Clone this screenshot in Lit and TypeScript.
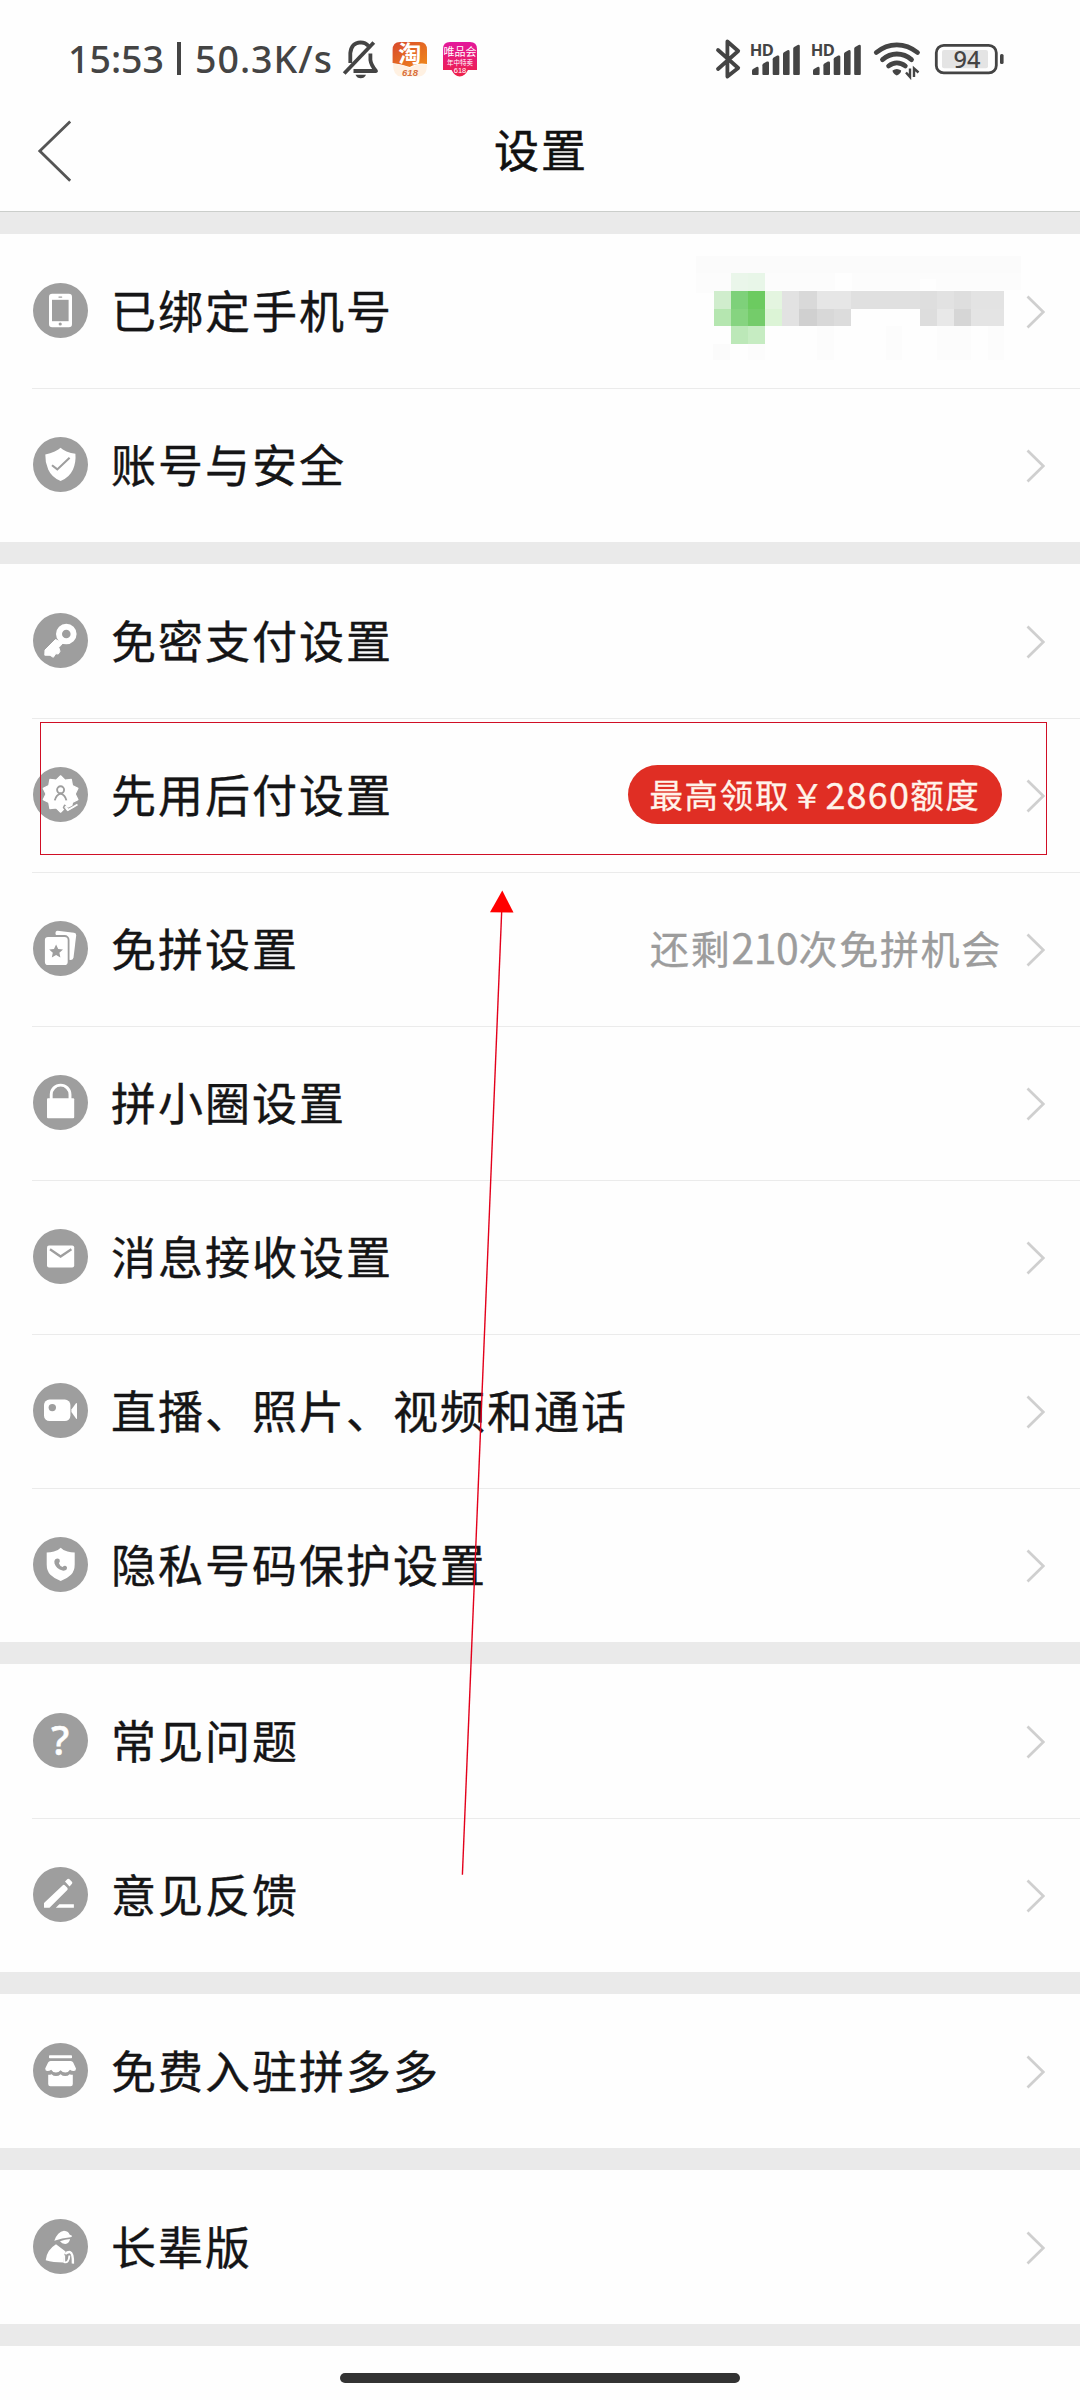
import { LitElement, html, svg, css, nothing, type TemplateResult } from "lit";
import { customElement, property } from "lit/decorators.js";

const GREY = "#9e9e9e";

/* Ten-pointed rosette used by the pay-later icon. */
const rosette = Array.from({ length: 20 }, (_, i) => {
  const r = i % 2 === 0 ? 18.2 : 14.6;
  const a = (Math.PI * i) / 10 - Math.PI / 2;
  return `${(27.6 + r * Math.cos(a)).toFixed(2)},${(27 + r * Math.sin(a)).toFixed(2)}`;
}).join(" ");

/* White pictograms, drawn on a 55 x 55 grey disc. */
const GLYPHS: Record<string, TemplateResult> = {
  phone: svg`<rect x="16" y="10.8" width="23" height="33.4" rx="3.2" fill="#fff"/>
    <rect x="19" y="16.8" width="16.6" height="21.4" fill=${GREY}/>
    <rect x="25.3" y="13.4" width="4" height="1.4" rx="0.7" fill=${GREY}/>
    <circle cx="27.2" cy="41" r="1.6" fill=${GREY}/>`,
  shield: svg`<path fill="#fff" d="M27.6 10.8Q29 12.4 33.5 14.4Q38 16.2 42.4 16.8Q43.2 25 40 32.5Q36.4 40.5 27.6 44Q18.8 40.5 15.2 32.5Q12 25 12.3 17.4Q17.2 16.2 21.7 14.4Q26 12.5 27.6 10.8Z"/>
    <path d="M19 28.2L24.3 32.4L36.6 20.8" fill="none" stroke=${GREY} stroke-width="2.1"/>`,
  key: svg`<circle cx="33.3" cy="21" r="7.3" fill="none" stroke="#fff" stroke-width="6"/>
    <path fill="#fff" stroke="#fff" stroke-width="1" stroke-linejoin="round" d="M22.5 26.5L12 37L11.8 42.2L17 42.3L20.3 44.3L22.8 40.7L25.3 41L27 38.3L25.8 34.5L30 30Z"/>`,
  rosette: svg`<polygon points=${rosette} fill="#fff" stroke="#fff" stroke-width="1.2" stroke-linejoin="round"/>
    <circle cx="27.6" cy="22.8" r="3.5" fill="none" stroke=${GREY} stroke-width="1.9"/>
    <path d="M21.8 33.4Q23.2 27.6 27.6 26.6Q32 27.6 33.4 33.4" fill="none" stroke=${GREY} stroke-width="1.9"/>
    <path d="M31.6 38.2L34.8 41.8L45.6 36.6L42.5 40.3L34 45L30.5 40.5Z" fill="#fff" stroke=${GREY} stroke-width="1.5" stroke-linejoin="round"/>
    <path d="M32.5 39L35 43L44.5 37.5" fill="none" stroke="#fff" stroke-width="1.9"/>`,
  cards: svg`<path fill="#fff" d="M24.5 9.8L41 11.7Q43.4 12 43.2 14.5L40.5 36.6Q40.2 39 38 39L35.5 38.8L22.5 13Q22.3 9.9 24.5 9.8Z"/>
    <rect x="11" y="15" width="24.6" height="30" rx="4" fill="#fff" stroke=${GREY} stroke-width="1.8"/>
    <path fill=${GREY} d="M23.1 23.4L25.2 28L30 28.5L26.4 31.7L27.4 36.6L23.1 34L18.8 36.6L19.8 31.7L16.2 28.5L21 28Z"/>`,
  lock: svg`<rect x="14" y="23.3" width="27.2" height="20" rx="1" fill="#fff"/>
    <path d="M18.2 24V19.5A9.4 9.4 0 0 1 37 19.5V24" fill="none" stroke="#fff" stroke-width="2.9"/>`,
  mail: svg`<rect x="14" y="16.4" width="27.2" height="22.2" rx="2" fill="#fff"/>
    <path d="M17 20.3L27.6 27.5L38.4 20.3" fill="none" stroke=${GREY} stroke-width="2.3"/>`,
  camera: svg`<rect x="11" y="16.6" width="26.4" height="21.4" rx="5.5" fill="#fff"/>
    <circle cx="19.3" cy="24.6" r="3.7" fill=${GREY}/>
    <path d="M38.4 26.5L43 20.3Q44 19.3 44 21V35Q44 36.6 43 35.4L38.4 29Z" fill="#fff"/>`,
  callShield: svg`<path fill="#fff" d="M27.7 10.8Q30 13.5 34.5 14.5Q38 15.3 41.7 15.5V27.5Q41.7 34 38 37.8Q34 41.8 27.7 44Q21.4 41.8 17.4 37.8Q13.7 34 13.7 27.5V15.5Q17.4 15.3 20.9 14.5Q25.4 13.5 27.7 10.8Z"/>
    <path fill=${GREY} d="M22.3 22.3Q24.8 20.8 26.6 22.6Q27.4 24.5 25.9 26.3Q26.9 29.3 29.6 29.9Q31.3 28.3 33 29Q34.6 30 33.8 32.3Q32.4 34 29.5 33.6Q23.4 32 21.5 26.5Q20.8 23.5 22.3 22.3Z"/>`,
  question: svg`<text x="27.3" y="41.7" text-anchor="middle" font-family="Noto Sans, sans-serif" font-weight="500" font-size="40" fill="#fff" stroke="#fff" stroke-width="0.6">?</text>`,
  pencil: svg`<path fill="#fff" d="M11 36L29.8 18.2Q31 17.4 32 18.5L34.3 20.8Q35.2 22 34.3 23L16.5 40.8H11.5Q11 40.8 11 40.3Z"/>
    <path fill="#fff" d="M32 14.5L34.5 12Q35.5 11.3 36.5 12.2L38.9 14.7Q39.8 15.8 39 16.8L36.5 19.6Z"/>
    <path fill="#fff" d="M26.3 37.3H40.9V40.8H22.8Z"/>`,
  store: svg`<rect x="16" y="12.3" width="23" height="2.9" rx="0.8" fill="#fff"/>
    <path fill="#fff" d="M17.5 17.9H37.8Q39.5 17.9 40.2 19.5L43 25.5Q43 28 40.8 28Q38.5 28 37 26.8Q35.5 29.6 32.3 29.6Q29.5 29.6 27.6 27.2Q25.7 29.6 22.9 29.6Q19.7 29.6 18.2 26.8Q16.7 28 14.4 28Q12.2 28 12.2 25.5L15.1 19.5Q15.8 17.9 17.5 17.9Z"/>
    <path fill="#fff" d="M15.2 31.8Q17.3 31.7 18.6 31.2Q20.3 33.1 23 33.1Q25.7 33.1 27.6 31.2Q29.5 33.1 32.2 33.1Q34.9 33.1 36.6 31.2Q37.9 31.7 39.8 31.8V41Q39.8 43.2 37.6 43.2H17.4Q15.2 43.2 15.2 41Z"/>`,
  elder: svg`<path fill="#fff" d="M21.3 21.8Q24.5 12.5 31 11.7Q36 12.3 36.5 15.6L39 16.8Q39.2 18 37.5 18.2Q29 18.8 21.3 21.8Z"/>
    <path fill="#fff" d="M27 22.3Q32 20.2 37 20Q36.3 24.8 32.3 24.9Q29 25 27 22.3Z"/>
    <path fill="#fff" d="M23 25.2L32.6 32.6Q30.6 36 30.5 43.6Q20 43.5 12.7 41.3Q13.5 31 23 25.2Z"/>
    <path d="M31.2 36.2V43.2Q35.8 44.600 36.400 36.500" fill="none" stroke="#fff" stroke-width="1.900" stroke-linejoin="round"/>
    <path d="M32.200 35Q34.500 32.800 37 33.100Q40.200 34 39.900 44.600" fill="none" stroke="#fff" stroke-width="2.400"/>`,
};

interface Item {
  icon: string;
  label: string;
  kind?: "mosaic" | "badge" | "note";
}

const GROUPS: Item[][] = [
  [
    { icon: "phone", label: "已绑定手机号", kind: "mosaic" },
    { icon: "shield", label: "账号与安全" },
  ],
  [
    { icon: "key", label: "免密支付设置" },
    { icon: "rosette", label: "先用后付设置", kind: "badge" },
    { icon: "cards", label: "免拼设置", kind: "note" },
    { icon: "lock", label: "拼小圈设置" },
    { icon: "mail", label: "消息接收设置" },
    { icon: "camera", label: "直播、照片、视频和通话" },
    { icon: "callShield", label: "隐私号码保护设置" },
  ],
  [
    { icon: "question", label: "常见问题" },
    { icon: "pencil", label: "意见反馈" },
  ],
  [{ icon: "store", label: "免费入驻拼多多" }],
  [{ icon: "elder", label: "长辈版" }],
];

/* Pixelated phone number: [x, y, width, height, colour]. */
const MOSAIC: [number, number, number, number, string][] = [
  [0, 0, 325, 17, "#fbfbfb"], [0, 17, 35, 20, "#fcfcfc"], [69, 17, 256, 17, "#fcfcfc"],
  [139, 17, 17, 17, "#fefefe"], [224, 23, 16, 11, "#fefefe"],
  [35, 17, 17, 18, "#eaf6ea"], [52, 17, 17, 18, "#e8f6e8"],
  [18, 35, 17, 18, "#d0edcd"], [35, 35, 17, 18, "#7ed17a"], [52, 35, 17, 18, "#6ccb60"], [69, 35, 17, 18, "#e4f5e0"],
  [18, 53, 17, 17, "#b5e6b0"], [35, 53, 17, 17, "#86d480"], [52, 53, 17, 17, "#74cc6a"], [69, 53, 17, 17, "#dcf4d6"],
  [35, 70, 17, 18, "#bce8b8"], [52, 70, 17, 18, "#c6ecc2"],
  [86, 35, 17, 18, "#e2e2e2"], [103, 35, 18, 18, "#d9d9d9"], [121, 35, 34, 18, "#e6e6e6"], [155, 35, 69, 18, "#e0e0e0"],
  [224, 35, 17, 18, "#dedede"], [241, 35, 17, 18, "#e2e2e2"], [258, 35, 17, 18, "#dedede"], [275, 35, 33, 18, "#e3e3e3"],
  [86, 53, 17, 17, "#e2e2e2"], [103, 53, 18, 17, "#d0d0d0"], [121, 53, 17, 17, "#d8d8d8"], [138, 53, 17, 17, "#dcdcdc"],
  [224, 53, 17, 17, "#dddddd"], [241, 53, 17, 17, "#e8e8e8"], [258, 53, 17, 17, "#d6d6d6"], [275, 53, 33, 17, "#e4e4e4"],
  [17, 88, 17, 16, "#fbfbfb"], [52, 88, 17, 16, "#fcfcfc"], [121, 70, 17, 34, "#fcfcfc"],
  [190, 70, 16, 34, "#fcfcfc"], [241, 70, 34, 34, "#fcfcfc"], [292, 70, 16, 34, "#fcfcfc"],
];

@customElement("setting-row")
export class SettingRow extends LitElement {
  @property({ attribute: false }) item!: Item;

  static styles = css`
    :host { display: flex; box-sizing: border-box; height: 154px; align-items: center; padding: 0 35px 0 33px; }
    .disc { display: block; flex: none; width: 55px; height: 55px; margin-bottom: 1px; }
    .label {
      flex: 1; margin: 0 0 3px 23px; white-space: nowrap; color: #151516;
      font-size: 45px; line-height: 64px; letter-spacing: 2px; -webkit-text-stroke: 0.35px #151516;
    }
    .chevron { display: block; flex: none; width: 20px; height: 36px; margin: 1px 0 0 22px; }
    .badge {
      box-sizing: border-box; width: 374px; height: 59px; border-radius: 30px; background: #e02e24; color: #fff3ea;
      display: flex; align-items: center; justify-content: center; margin: 0 1px 1px 0; padding-bottom: 3px;
      font-size: 33.5px; letter-spacing: 1.7px; white-space: nowrap; -webkit-text-stroke: 0.3px #fff3ea;
    }
    .badge .num { font-size: 36px; letter-spacing: 1.2px; }
    .note { color: #9c9c9c; font-size: 39px; letter-spacing: 1.7px; line-height: 60px; white-space: nowrap; margin: 0 1px 5px 0; -webkit-text-stroke: 0.3px #9c9c9c; }
    .note .num { font-size: 41px; letter-spacing: -0.4px; }
    .mosaic { display: block; width: 325px; height: 104px; margin: 0 -18px 6px 0; }
  `;

  private extra() {
    switch (this.item.kind) {
      case "badge":
        return html`<div class="badge"><span>最高领取￥</span><span class="num">2860</span><span>额度</span></div>`;
      case "note":
        return html`<div class="note">还剩<span class="num">210</span>次免拼机会</div>`;
      case "mosaic":
        return html`<svg class="mosaic" viewBox="0 0 325 104" shape-rendering="crispEdges">
          ${MOSAIC.map(([x, y, w, h, c]) => svg`<rect x=${x} y=${y} width=${w} height=${h} fill=${c}/>`)}
        </svg>`;
      default:
        return nothing;
    }
  }

  render() {
    return html`
      <svg class="disc" viewBox="0 0 55 55"><circle cx="27.5" cy="27.5" r="27.5" fill=${GREY} />${GLYPHS[this.item.icon]}</svg>
      <span class="label">${this.item.label}</span>
      ${this.extra()}
      <svg class="chevron" viewBox="0 0 20 36"><path d="M2.5 2.5L18.3 18L2.5 33.5" fill="none" stroke="#cfcfcf" stroke-width="2.7" /></svg>
    `;
  }
}

@customElement("status-bar")
export class StatusBar extends LitElement {
  static styles = css`
    :host { display: flex; box-sizing: border-box; height: 92px; padding: 36px 74px 0 68px; align-items: flex-start; color: #444; }
    .clock { display: flex; width: 272px; font: 500 37.5px/46px "Noto Sans", sans-serif; white-space: nowrap; }
    .time { width: 101px; }
    .bar { width: 4px; height: 33px; margin: 6px 14px 0 8px; background: #444; }
    .speed { letter-spacing: 1px; }
    svg { display: block; flex: none; height: 44px; }
    .bell { width: 40px; }
    .tao { width: 36px; margin-left: 12px; }
    .vip { width: 36px; margin-left: 14px; }
    .space { flex: 1; }
    .bt { width: 28px; }
    .sig { width: 54px; margin-left: 7px; }
    .wifi { width: 50px; margin-left: 7px; }
    .bat { width: 74px; margin-left: 10px; }
  `;

  private signal() {
    const bars = [[753, 66.7], [763.4, 61.3], [773.7, 55.3], [784, 50], [794.2, 44.7]];
    return html`<svg class="sig" viewBox="751 36 54 44">
      <text x="750.8" y="55.5" font-family="Noto Sans, sans-serif" font-weight="700" font-size="16.5" textLength="24" fill="#444">HD</text>
      ${bars.map(([x, y]) => svg`<path fill="#444" d="M${x} ${y + 4}Q${x} ${y + 3} ${x + 1} ${y + 2.3}L${x + 4.5} ${y + 0.2}Q${x + 6.6} ${y - 0.3} ${x + 6.6} ${y + 1.5}V74Q${x + 6.6} 75 ${x + 5.6} 75H${x + 1}Q${x} 75 ${x} 74Z"/>`)}
    </svg>`;
  }

  render() {
    return html`
      <span class="clock"><span class="time">15:53</span><span class="bar"></span><span class="speed">50.3K/s</span></span>
      <svg class="bell" viewBox="340 36 40 44" fill="none" stroke="#444" stroke-width="3.8">
        <path d="M344.2 73.5L373.8 42.5" />
        <path d="M350.3 63V53Q351.5 42.7 360.5 42.4Q365.5 42.4 368.6 46" />
        <path d="M370.4 53.5V60Q371 65 376 71H353.5" stroke-linejoin="round" />
        <path d="M355.5 74.8H366Q364.5 78.3 360.7 78.3Q357 78.3 355.5 74.8Z" fill="#444" stroke="none" />
      </svg>
      <svg class="tao" viewBox="392 36 36 44">
        <defs><linearGradient id="t" x1="0" y1="0" x2="1" y2="1"><stop offset="0" stop-color="#d8492c" /><stop offset="1" stop-color="#f08a1c" /></linearGradient></defs>
        <path d="M400 42H420Q427 42 427 50V64Q418 62 409.7 67Q401 64 392.6 63V50Q392.6 42 400 42Z" fill="url(#t)" />
        <path d="M393 64Q402 64 409.7 68Q418 63 427 64.5Q427 76.5 418 76.5H401Q393 76 393 64Z" fill="#fff1e2" />
        <text x="409.8" y="62" text-anchor="middle" font-family="Noto Sans CJK SC, sans-serif" font-weight="700" font-size="23" fill="#fff">淘</text>
        <text x="410" y="76" text-anchor="middle" font-family="Liberation Sans, sans-serif" font-style="italic" font-weight="700" font-size="9.5" fill="#d9703c">618</text>
      </svg>
      <svg class="vip" viewBox="442 36 36 44">
        <defs><linearGradient id="v" x1="0" y1="0" x2="0" y2="1"><stop offset="0" stop-color="#e3189c" /><stop offset="1" stop-color="#ee2048" /></linearGradient></defs>
        <path d="M450 42H470Q477 42 477 49V70H468Q465 76 459.7 76.5Q454.5 76 451.5 70H443V49Q443 42 450 42Z" fill="url(#v)" />
        <text x="460" y="56" text-anchor="middle" font-family="Noto Sans CJK SC, sans-serif" font-size="11" fill="#fff">唯品会</text>
        <text x="460" y="64.5" text-anchor="middle" font-family="Noto Sans CJK SC, sans-serif" font-size="6.5" fill="#fff">年中特卖</text>
        <text x="460" y="73" text-anchor="middle" font-family="Liberation Sans, sans-serif" font-size="7.5" fill="#fff">618</text>
      </svg>
      <span class="space"></span>
      <svg class="bt" viewBox="714 37 28 44" fill="none" stroke="#444" stroke-width="3.8" stroke-linejoin="round" stroke-linecap="round">
        <path d="M717 51L737.2 69L726.4 77.5V42.5L737.2 52L717 70" />
      </svg>
      ${this.signal()}
      ${this.signal()}
      <svg class="wifi" viewBox="872 36 50 44" fill="none" stroke="#444" stroke-linecap="round" stroke-width="4.8">
        <path d="M876.3 52.5Q885.5 44.8 896.8 44.8Q908 44.8 917.5 52.5" />
        <path d="M882.5 59.6Q889 54 896.8 54Q905 54 911.5 59.6" />
        <path d="M888.6 66Q892.5 62.8 896.8 62.8Q901.5 62.8 905.3 66" />
        <path d="M892.5 70.5Q896.8 67.3 901.2 70.5Q901 73.5 896.8 75.6Q892.7 73.5 892.5 70.5Z" fill="#444" stroke="none" />
        <path d="M906 72.5L910 77V68.5M914 77V68.5L918.5 72.5" stroke-width="2.4" stroke-linecap="butt" />
      </svg>
      <svg class="bat" viewBox="932 36 74 44">
        <rect x="936.3" y="45.3" width="60" height="27.6" rx="7.5" fill="none" stroke="#444" stroke-width="2.8" />
        <rect x="942" y="50" width="46" height="18.3" rx="2" fill="#e4e4e4" />
        <rect x="1000" y="54" width="3.6" height="10" rx="1.6" fill="#444" />
        <text x="967" y="67.7" text-anchor="middle" font-family="Noto Sans, sans-serif" font-weight="500" font-size="23.5" fill="#444">94</text>
      </svg>
    `;
  }
}

@customElement("app-root")
export class AppRoot extends LitElement {
  static styles = css`
    :host {
      display: flex; flex-direction: column; position: relative; box-sizing: border-box;
      width: 1080px; height: 2400px; overflow: hidden; background: #fefefe;
      font-family: "Noto Sans CJK SC", sans-serif;
    }
    .nav {
      display: grid; grid-template-columns: 120px 1fr 120px; align-items: center;
      box-sizing: border-box; height: 119px; flex: none;
    }
    .back { display: block; width: 36px; height: 64px; margin: 0 0 1px 36px; }
    .title {
      margin: 0 0 5px; padding-left: 2px; text-align: center; font-size: 45px; line-height: 64px; font-weight: 400;
      letter-spacing: 2px; color: #111; -webkit-text-stroke: 0.5px #111;
    }
    .band { flex: none; height: 22px; background: #eaeaea; }
    .band.first { box-sizing: border-box; height: 23px; border-top: 1px solid #cbcecb; }
    .group { display: flex; flex-direction: column; flex: none; }
    .line { height: 1px; margin: 0 0 -1px 32px; background: #ebebeb; }
    .foot { display: flex; justify-content: center; padding-top: 27px; }
    .home { width: 400px; height: 10px; border-radius: 5px; background: #333; }
    .frame { position: absolute; left: 40px; top: 722px; width: 1005px; height: 131px; border: 1px solid #d00f26; }
    .arrow { position: absolute; left: 455px; top: 888px; width: 64px; height: 990px; }
  `;

  render() {
    return html`
      <status-bar></status-bar>
      <header class="nav">
        <svg class="back" viewBox="36 119 36 64"><path d="M70.2 121.5L39.8 151L70.2 180.8" fill="none" stroke="#555" stroke-width="2.8" /></svg>
        <h1 class="title">设置</h1>
      </header>
      ${GROUPS.map(
        (group, g) => html`
          <div class="band ${g === 0 ? "first" : ""}"></div>
          <section class="group">
            ${group.map(
              (item, i) => html`${i > 0 ? html`<div class="line"></div>` : nothing}<setting-row .item=${item}></setting-row>`,
            )}
          </section>
        `,
      )}
      <div class="band"></div>
      <footer class="foot"><div class="home"></div></footer>
      <div class="frame"></div>
      <svg class="arrow" viewBox="455 888 64 990">
        <path d="M501.7 911L462.4 1874.7" stroke="#e3001b" stroke-width="1.4" />
        <path d="M502.3 890.5L513.5 912.6L490 912.2Z" fill="#f00" />
      </svg>
    `;
  }
}
